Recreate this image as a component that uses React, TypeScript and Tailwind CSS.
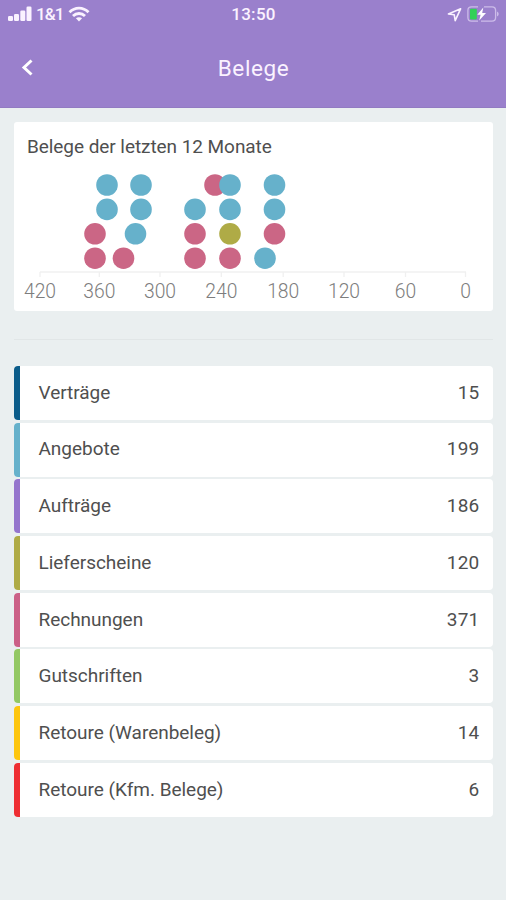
interface DocumentType {
  name: string;
  count: number;
  color: string;
}

interface Dot {
  x: number;
  row: number;
  color: string;
}

const BLUE = "#66b1cb";
const PINK = "#cb6685";
const OLIVE = "#afab46";

const documents: DocumentType[] = [
  { name: "Verträge", count: 15, color: "bg-[#0b5c8a]" },
  { name: "Angebote", count: 199, color: "bg-[#66b1cb]" },
  { name: "Aufträge", count: 186, color: "bg-[#9575cd]" },
  { name: "Lieferscheine", count: 120, color: "bg-[#afab46]" },
  { name: "Rechnungen", count: 371, color: "bg-[#cb6087]" },
  { name: "Gutschriften", count: 3, color: "bg-[#93c864]" },
  { name: "Retoure (Warenbeleg)", count: 14, color: "bg-[#fdc60f]" },
  { name: "Retoure (Kfm. Belege)", count: 6, color: "bg-[#ee2e33]" },
];

// row 0 is the top row of the chart
const dots: Dot[] = [
  { x: 93, row: 0, color: BLUE },
  { x: 127, row: 0, color: BLUE },
  { x: 201, row: 0, color: PINK },
  { x: 216, row: 0, color: BLUE },
  { x: 260.5, row: 0, color: BLUE },
  { x: 93, row: 1, color: BLUE },
  { x: 127, row: 1, color: BLUE },
  { x: 181, row: 1, color: BLUE },
  { x: 216, row: 1, color: BLUE },
  { x: 260.5, row: 1, color: BLUE },
  { x: 81, row: 2, color: PINK },
  { x: 121.5, row: 2, color: BLUE },
  { x: 181, row: 2, color: PINK },
  { x: 216, row: 2, color: OLIVE },
  { x: 260.5, row: 2, color: PINK },
  { x: 81, row: 3, color: PINK },
  { x: 109.5, row: 3, color: PINK },
  { x: 181, row: 3, color: PINK },
  { x: 216, row: 3, color: PINK },
  { x: 251, row: 3, color: BLUE },
];

const ticks = [
  { label: 420, x: 26 },
  { label: 360, x: 85.3 },
  { label: 300, x: 146 },
  { label: 240, x: 207.3 },
  { label: 180, x: 269.2 },
  { label: 120, x: 330 },
  { label: 60, x: 391.5 },
  { label: 0, x: 451.5 },
];

function StatusBar() {
  return (
    <div className="flex h-7 items-center justify-between pl-2 pr-[7px] text-[17px] leading-7">
      <div className="flex w-[120px] items-center">
        <svg width="24" height="16" viewBox="0 0 24 16" fill="currentColor">
          <rect x="0" y="10" width="5" height="5" rx="1.3" />
          <rect x="6" y="8" width="5" height="7" rx="1.3" />
          <rect x="12.3" y="4.5" width="5" height="10.5" rx="1.3" />
          <rect x="18.5" y="0.5" width="5" height="14.5" rx="1.3" />
        </svg>
        <span className="ml-1 w-[27px] whitespace-nowrap text-[17px] font-medium tracking-[-0.9px]">1&amp;1</span>
        <svg className="ml-[5px]" width="22" height="16" viewBox="0 0 22 16" fill="none" stroke="currentColor" strokeWidth="2.9">
          <path d="M1.5 6.2C7 .7 15 .7 20.5 6.2" />
          <path d="M5 10C8.5 6.7 13.5 6.7 17 10" />
          <path d="M11 15.5L7.9 12.3C9.8 10.8 12.2 10.8 14.1 12.3Z" fill="currentColor" stroke="none" />
        </svg>
      </div>
      <span className="font-medium tracking-[0.3px]">13:50</span>
      <div className="flex w-[120px] items-center justify-end">
        <svg className="mr-[5px]" width="15" height="15" viewBox="0 0 15 15" fill="none" stroke="currentColor" strokeWidth="1.6" strokeLinejoin="round">
          <path d="M13.6 1.8L1.4 7L7.2 7.7L8.2 13.6Z" />
        </svg>
        <svg width="32" height="16" viewBox="0 0 32 16" fill="none">
          <path d="M11 .9H4.5Q.9 .9 .9 4.5V11.5Q.9 15.1 4.5 15.1H11M17 .9H25Q28.6 .9 28.6 4.5V11.5Q28.6 15.1 25 15.1H14" stroke="#cdbce9" strokeWidth="1.3" />
          <path d="M30 5.5Q31.7 6.4 31.7 8T30 10.5Z" fill="#cdbce9" />
          <rect x="3" y="2.8" width="6.8" height="10.6" rx="1" fill="#32d158" />
          <path d="M16.3 1.5L10.3 8.8H13.6L12.2 14.5L19 7H15.2Z" fill="white" />
        </svg>
      </div>
    </div>
  );
}

function DotChart() {
  return (
    <svg className="block" width="479" height="149" viewBox="0 0 479 149">
      {dots.map((dot, i) => (
        <circle key={i} cx={dot.x} cy={23 + dot.row * 24.4} r={10.8} fill={dot.color} />
      ))}
      <path d="M26 110H452" stroke="#f0f0f0" strokeWidth="1.3" />
      {ticks.map((tick) => (
        <g key={tick.label}>
          <path d={`M${tick.x} 110V115`} stroke="#f0f0f0" strokeWidth="1.3" />
          <text x={tick.x} y={135.5} textAnchor="middle" fontSize="19.3" fill="#7d7d7d" className="font-light">
            {tick.label}
          </text>
        </g>
      ))}
    </svg>
  );
}

export default function App() {
  return (
    <div className="h-[900px] w-full overflow-hidden bg-[#eaeff0] font-[Roboto,sans-serif] text-[#4f4f4f]">
      <header className="h-[108px] border-b border-[#927bc2] bg-[#9a80cc] text-[#faf2ff]">
        <StatusBar />
        <div className="grid h-20 grid-cols-[60px_1fr_60px] items-center">
          <button type="button" aria-label="Zurück" className="pl-[21px]">
            <svg width="14" height="18" viewBox="0 0 14 18" fill="none" stroke="white" strokeWidth="3">
              <path d="M10.5 1.5L3 8.5L10.5 15.5" />
            </svg>
          </button>
          <h1 className="pl-px text-center text-[22.5px] leading-none tracking-[0.6px]">Belege</h1>
        </div>
      </header>
      <main className="pl-[14px] pr-[13px] pt-[14px]">
        <section className="h-[189px] rounded-[3px] bg-white">
          <h2 className="h-10 pl-[13px] pt-[11px] text-[19px] leading-7 tracking-[-0.06px]">Belege der letzten 12 Monate</h2>
          <DotChart />
        </section>
        <hr className="mt-7 mb-[26px] border-[#e1e6e7]" />
        <ul className="flex flex-col gap-[2.7px]">
          {documents.map((doc) => (
            <li key={doc.name} className="flex h-[54px] items-center overflow-hidden rounded-[4px] bg-white pr-[13.5px] text-[19px]">
              <span className={`mr-[19px] h-full w-[5.5px] ${doc.color}`} />
              <span className="flex-1 tracking-[-0.03px]">{doc.name}</span>
              <span className="tracking-[0.2px]">{doc.count}</span>
            </li>
          ))}
        </ul>
      </main>
    </div>
  );
}
